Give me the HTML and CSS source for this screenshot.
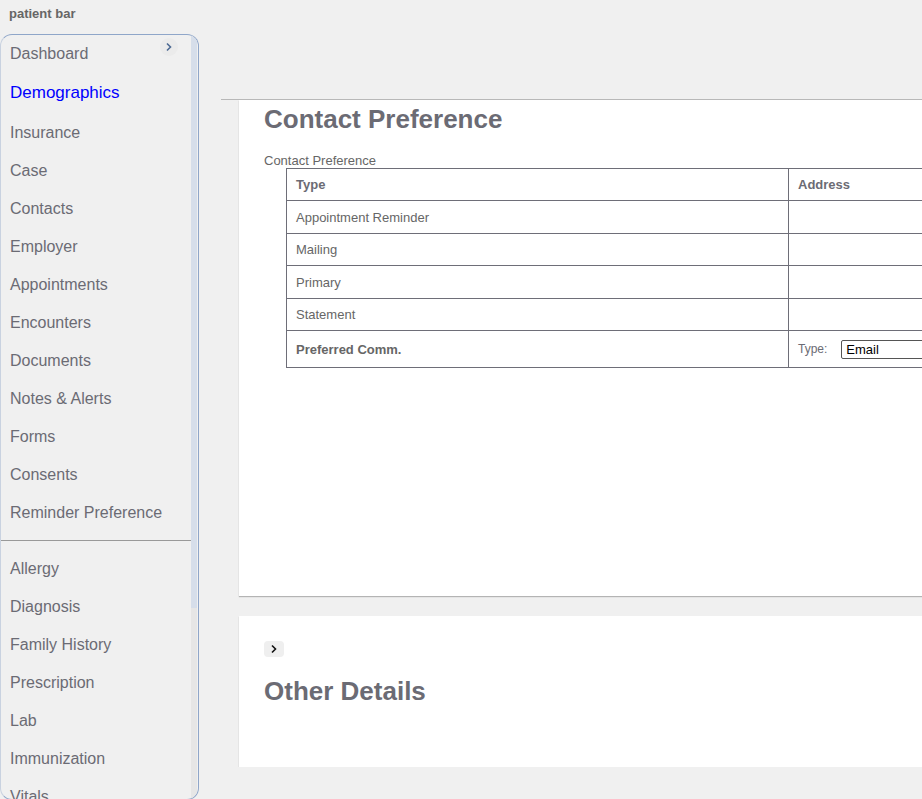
FILE: index.html
```html
<!DOCTYPE html>
<html>
<head>
<meta charset="utf-8">
<link rel="stylesheet" href="styles.css">
</head>
<body>
<div class="patient-bar">patient bar</div>
<div class="layout">
  <nav class="sidebar">
    <div class="side-scroll">
      <ul class="menu menu1">
        <li class="item">Dashboard</li>
        <li class="item active">Demographics</li>
        <li class="item">Insurance</li>
        <li class="item">Case</li>
        <li class="item">Contacts</li>
        <li class="item">Employer</li>
        <li class="item">Appointments</li>
        <li class="item">Encounters</li>
        <li class="item">Documents</li>
        <li class="item">Notes &amp; Alerts</li>
        <li class="item">Forms</li>
        <li class="item">Consents</li>
        <li class="item">Reminder Preference</li>
      </ul>
      <hr class="divider">
      <ul class="menu menu2">
        <li class="item">Allergy</li>
        <li class="item">Diagnosis</li>
        <li class="item">Family History</li>
        <li class="item">Prescription</li>
        <li class="item">Lab</li>
        <li class="item">Immunization</li>
        <li class="item">Vitals</li>
      </ul>
    </div>
    <div class="scrollbar"><div class="thumb"></div></div>
    <span class="collapse"><svg width="8" height="10" viewBox="0 0 8 10"><path d="M2 1.5 L5.5 5 L2 8.5" fill="none" stroke="#4d6a93" stroke-width="1.6"/></svg></span>
  </nav>
  <main class="main">
    <section class="panel panel1">
      <h2 class="title">Contact Preference</h2>
      <div class="caption">Contact Preference</div>
      <table class="cp-table">
        <tr class="head"><th class="c1">Type</th><th>Address</th></tr>
        <tr class="r32"><td class="c1">Appointment Reminder</td><td></td></tr>
        <tr class="r31"><td class="c1">Mailing</td><td></td></tr>
        <tr class="r32"><td class="c1">Primary</td><td></td></tr>
        <tr class="r31"><td class="c1">Statement</td><td></td></tr>
        <tr class="pref"><td class="c1"><b>Preferred Comm.</b></td><td><span class="type-lbl">Type:</span><span class="select">Email</span></td></tr>
      </table>
    </section>
    <section class="panel panel2">
      <span class="expand"><svg width="8" height="10" viewBox="0 0 8 10"><path d="M2 1.5 L5.5 5 L2 8.5" fill="none" stroke="#111" stroke-width="1.6"/></svg></span>
      <h2 class="title title2">Other Details</h2>
    </section>
  </main>
</div>
</body>
</html>
```
FILE: styles.css
```css
html, body { margin: 0; padding: 0; }
body {
  background: #f0f0f0;
  font-family: "Liberation Sans", Arial, sans-serif;
  color: #6b6b74;
  width: 922px;
  height: 799px;
  overflow: hidden;
}
.patient-bar {
  height: 34px;
  box-sizing: border-box;
  padding: 6px 0 0 9px;
  font-size: 13px;
  font-weight: bold;
  color: #666;
}
.layout { display: flex; align-items: flex-start; }
.sidebar {
  position: relative;
  width: 199px;
  height: 766px;
  box-sizing: border-box;
  border: 1px solid #8fa6c9;
  border-left-color: #c9d2e0;
  border-radius: 12px;
  overflow: hidden;
  display: flex;
  flex-shrink: 0;
}
.side-scroll { flex: 1; }
.menu { list-style: none; margin: 0; padding: 0; }
.menu1 { padding-top: 9px; }
.item {
  font-size: 16px;
  height: 38px;
  line-height: 20px;
  padding-left: 9px;
  color: #6b6b74;
}
.item.active { color: #0000ff; font-size: 17px; height: 40px; box-sizing: border-box; }
.menu1 .item:first-child { height: 39px; }
.divider {
  margin: -1px 0 0 0;
  border: 0;
  border-top: 1px solid #999;
  height: 0;
}
.menu2 { padding-top: 18px; }
.scrollbar {
  width: 6px;
  margin-right: 1px;
  background: #e6e6e6;
}
.thumb { height: 573px; background: #d6deea; }
.collapse {
  position: absolute;
  top: 3px;
  right: 20px;
  width: 18px;
  height: 18px;
  border-radius: 50%;
  background: #ebebeb;
  display: flex;
  align-items: center;
  justify-content: center;
}
.main {
  flex: 1;
  margin-left: 22px;
  margin-top: 65px;
  border-top: 1px solid #b8b8b8;
  overflow: hidden;
}
.panel {
  margin-left: 18px;
  background: #fff;
  box-shadow: 0 1px 1px rgba(0,0,0,0.25);
  overflow: hidden;
  padding-left: 25px;
}
.panel1 { height: 496px; }
.panel2 { margin-top: 20px; height: 151px; }
.title {
  margin: 0;
  font-size: 26px;
  font-weight: bold;
  color: #6b6b74;
  line-height: 30px;
  padding-top: 4px;
}
.caption {
  font-size: 13px;
  margin-top: 19px;
  color: #666;
  line-height: 15px;
}
.cp-table {
  margin-left: 22px;
  border-collapse: collapse;
  width: 720px;
  font-size: 13px;
  color: #666;
}
.cp-table th, .cp-table td {
  border: 1px solid #6e6e78;
  text-align: left;
  padding: 0 9px;
}
.cp-table th { height: 31px; color: #6b6b74; }
.cp-table tr.r32 td { height: 32px; }
.cp-table tr.r31 td { height: 31px; }
.cp-table .c1 { width: 483px; }
.cp-table tr.pref td { height: 36px; }
.type-lbl { font-size: 12px; color: #6b6b74; }
.select {
  display: inline-block;
  margin-left: 14px;
  width: 120px;
  height: 17px;
  border: 1px solid #555;
  border-radius: 2px;
  padding-left: 4px;
  font-size: 13px;
  line-height: 17px;
  color: #000;
  vertical-align: middle;
}
.expand {
  display: flex;
  align-items: center;
  justify-content: center;
  width: 20px;
  height: 16px;
  margin-top: 25px;
  background: #efefef;
  border-radius: 4px;
}
.title2 { padding-top: 19px; }
```
